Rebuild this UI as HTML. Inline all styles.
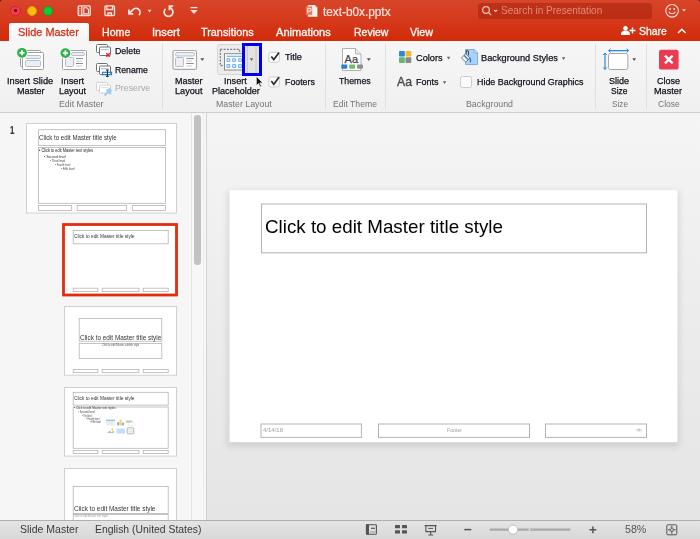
<!DOCTYPE html>
<html><head><meta charset="utf-8">
<style>
*{margin:0;padding:0;box-sizing:border-box}
html,body{width:700px;height:539px;overflow:hidden;background:#e9e9e9;font-family:"Liberation Sans",sans-serif}
.a{position:absolute}
.t{position:absolute;white-space:nowrap;line-height:1;transform-origin:0 0}
#top{left:0;top:0;width:700px;height:41px;background:linear-gradient(#d8452a,#d5391b 50%,#d12b09);border-radius:2.5px 2.5px 0 0}
.tl{position:absolute;top:5.55px;width:10.5px;height:10.5px;border-radius:50%}
.tab{color:#fff;font-size:11px;top:26.7px;-webkit-text-stroke:0.35px #fff}
#ribbon{left:0;top:41px;width:700px;height:72px;background:linear-gradient(#f6f6f6,#f0f0f0);border-bottom:1px solid #cfcfcf}
.rt{font-size:9.3px;color:#1f1f30;-webkit-text-stroke:0.2px #1f1f30}
.gl{font-size:9.3px;color:#808080}
.sep{position:absolute;top:44px;width:1px;height:65px;background:#e0e0e0}
.arr{position:absolute;width:0;height:0;border-left:3px solid transparent;border-right:3px solid transparent;border-top:4px solid #6a6a6a}
#left{left:0;top:113px;width:191px;height:407px;background:#f6f6f6}
#main{left:207px;top:113px;width:493px;height:407px;background:linear-gradient(#f5f5f5,#ececec 50%,#e5e5e5)}
#status{left:0;top:520px;width:700px;height:19px;background:linear-gradient(#e4e4e4,#d8d8d8);border-top:1px solid #b0b0b0}
.thumb{position:absolute;background:#fff;border:1px solid #cfcfcf}
.ph{position:absolute;border:1px solid #b8b8b8}
</style></head><body>
<!-- TOP BAR -->
<div class="a" style="left:0;top:0;width:700px;height:4px;background:#222"></div>
<div id="top" class="a">
  <div class="tl" style="left:10.15px;background:#f6394c;border:1px solid #cf2234"><div class="a" style="left:3.1px;top:2.9px;width:2.6px;height:2.6px;border-radius:50%;background:#4a0808"></div></div>
  <div class="tl" style="left:26.75px;background:#fdbb0c;border:1px solid #dc9b10"></div>
  <div class="tl" style="left:42.95px;background:#12ca34;border:1px solid #0ea42a"></div>
  <!-- tabs -->
  <div class="a" style="left:9px;top:23px;width:80px;height:18px;background:linear-gradient(#fdfdfd,#f4f4f4);border-radius:2px 2px 0 0"></div>
  <!-- title -->
  <!-- search -->
  <div class="a" style="left:478px;top:3px;width:174px;height:16px;border-radius:3px;background:rgba(150,28,8,0.42)"></div>
  <svg class="a" style="left:0;top:0" width="700" height="41" viewBox="0 0 700 41">
   <g fill="none" stroke="#fbe3dc" stroke-width="1.3">
    <rect x="78.2" y="5.9" width="12" height="9.6" rx="1"/><path d="M81.8 5.9v9.6"/>
    <path d="M79.9 8.2v.9M79.9 10.3v.9M79.9 12.4v.9" stroke-width="1"/>
    <path d="M83.8 7.8h3l1.7 1.7v4.4h-4.7z" stroke-width="1.1"/>
    <rect x="104.9" y="5.9" width="9.6" height="9.6" rx="1"/><path d="M106.8 5.9v3.6h5.8v-3.6M108 15.5v-2.5h3.4v2.5"/>
    <path d="M128.9 9.4v4.4h4.4" stroke-width="1.8"/>
    <path d="M129.3 13.4l3.8-3.8a4 4 0 1 1 5.8 5.6" stroke-width="1.8"/>
    <path d="M165.5 8.9A4.4 4.4 0 1 0 171.6 8.9L169.4 6.7M169.4 10.2V6.2h3.8" stroke-width="1.7"/>
   </g>
   <path d="M147.5 9.8h4l-2 2.6z" fill="#fbe3dc"/>
   <path d="M190.5 7.6h7" stroke="#fbe3dc" stroke-width="1.3"/><path d="M190.3 10h7.4l-3.7 4z" fill="#fbe3dc"/>
   <!-- ppt doc icon -->
   <path d="M307.8 5h7l2.6 2.6v9.1h-9.6z" fill="#f7efe9"/>
   <path d="M314.8 5v2.6h2.6z" fill="#d9c4bd"/>
   <rect x="305.8" y="6.5" width="6.4" height="8.3" fill="#e8765a"/>
   <path d="M307.7 13.3v-5h1.9a1.5 1.5 0 0 1 0 3h-1.9" fill="none" stroke="#fbe9e2" stroke-width="1.1"/>
   <!-- search magnifier -->
   <circle cx="486" cy="10" r="3.3" fill="none" stroke="#f0c3b8" stroke-width="1.2"/>
   <path d="M488.4 12.4l2.8 2.8M494 10l1.6 1.5 1.6-1.5" fill="none" stroke="#f0c3b8" stroke-width="1.2"/>
   <!-- smiley -->
   <circle cx="672.1" cy="10.8" r="6.3" fill="none" stroke="#fbe3dc" stroke-width="1.1"/>
   <circle cx="670" cy="9" r=".9" fill="#fbe3dc"/><circle cx="674.2" cy="9" r=".9" fill="#fbe3dc"/>
   <path d="M668.8 11.8c1.5 2.6 5.1 2.6 6.6 0" fill="none" stroke="#fbe3dc" stroke-width="1.1"/>
   <path d="M682 9.3h4l-2 2.3z" fill="#fbe3dc"/>
   <!-- share -->
   <circle cx="625.5" cy="28.3" r="2.3" fill="#fff"/>
   <path d="M621 35c0-3.5 1.8-4.5 4.5-4.5s4.5 1 4.5 4.5z" fill="#fff"/>
   <path d="M632.5 27.5v6M629.5 30.5h6" stroke="#fff" stroke-width="1.4"/>
   <path d="M678 33l3.8-3.8 3.8 3.8" fill="none" stroke="#fff" stroke-width="1.5"/>
  </svg>
</div>
<!-- RIBBON -->
<div id="ribbon" class="a"></div>
<div class="sep" style="left:162px"></div>
<div class="sep" style="left:325px"></div>
<div class="sep" style="left:385px"></div>
<div class="sep" style="left:594.5px"></div>
<div class="sep" style="left:646px"></div>
<svg class="a" style="left:0;top:0" width="700" height="120" viewBox="0 0 700 120">
 <!-- Insert Slide Master -->
 <rect x="20.5" y="50.5" width="20" height="16" rx="1" fill="#fff" stroke="#9c9c9c"/>
 <rect x="22.5" y="52.5" width="21" height="17" rx="1" fill="#fff" stroke="#9c9c9c"/>
 <rect x="25.5" y="55.5" width="15" height="3" rx="1" fill="#eceef2" stroke="#b3bdd0"/>
 <rect x="25.5" y="60.5" width="15" height="6" rx="1" fill="#eceef2" stroke="#b3bdd0"/>
 <circle cx="22" cy="52.8" r="5.8" fill="#f5f5f5"/>
 <circle cx="22" cy="52.8" r="4.9" fill="#2eb24a"/>
 <path d="M22 50.3v5M19.5 52.8h5" stroke="#fff" stroke-width="1.8"/>
 <!-- Insert Layout -->
 <rect x="62.5" y="50.5" width="24" height="19" rx="1" fill="#fff" stroke="#a3a3a3"/>
 <rect x="71.5" y="52.5" width="13" height="3" rx="1.5" fill="#eceef2" stroke="#b3bdd0"/>
 <rect x="65.5" y="57.5" width="8" height="9" rx="1" fill="#eceef2" stroke="#b3bdd0"/>
 <path d="M76 58.5h7M76 63.5h7" stroke="#8d8d8d"/>
 <path d="M76 61h6M76 66h6" stroke="#c8c8c8"/>
 <circle cx="65.4" cy="53.1" r="5.8" fill="#f5f5f5"/>
 <circle cx="65.4" cy="53.1" r="4.9" fill="#2eb24a"/>
 <path d="M65.4 50.6v5M62.9 53.1h5" stroke="#fff" stroke-width="1.8"/>
 <!-- Delete -->
 <rect x="96.5" y="44.5" width="11" height="8" rx="1" fill="#fff" stroke="#707070"/>
 <rect x="99.5" y="47" width="11" height="8.5" rx="1" fill="#fff" stroke="#707070"/>
 <path d="M101 49.6h7.5" stroke="#b6c2d8" stroke-width="1.2"/>
 <path d="M106.3 53.2l3.6 3.6M109.9 53.2l-3.6 3.6" stroke="#e0203a" stroke-width="1.5"/>
 <!-- Rename -->
 <rect x="96.5" y="63.5" width="11" height="8" rx="1" fill="#fff" stroke="#707070"/>
 <rect x="99.5" y="66" width="11" height="8.5" rx="1" fill="#fff" stroke="#707070"/>
 <path d="M101 68.6h7.5" stroke="#b6c2d8" stroke-width="1.2"/>
 <rect x="102.5" y="72.3" width="9" height="2.4" fill="none" stroke="#2a82da" stroke-width="1.2"/>
 <path d="M107.4 70v6.4M106 70h2.8M106 76.4h2.8" stroke="#222" stroke-width="1"/>
 <!-- Preserve -->
 <rect x="96.5" y="82.5" width="11" height="8" rx="1" fill="#fff" stroke="#cfcfcf"/>
 <rect x="99.5" y="85" width="11" height="8" rx="1" fill="#fff" stroke="#cfcfcf"/>
 <path d="M101 87.6h7.5" stroke="#dde2ea" stroke-width="1.2"/>
 <path d="M104.5 95.5l3.5-3.5M106.5 89.5l4.5 4.5M108.5 88.5l3 3" stroke="#9fcbf2" stroke-width="2"/>
 <!-- Master Layout -->
 <rect x="173" y="50.5" width="23.5" height="18.8" rx="1.5" fill="#fff" stroke="#a8a8a8" stroke-width="1.2"/>
 <rect x="175.5" y="52.5" width="19" height="3.5" rx="1.5" fill="#eceef2" stroke="#b3bdd0"/>
 <rect x="175.5" y="57.5" width="8" height="9" rx="1" fill="#eceef2" stroke="#b3bdd0"/>
 <path d="M186.3 58.5h7.4M186.3 63.5h7.4" stroke="#8d8d8d"/>
 <path d="M186.3 61h5.7M186.3 66h5.7" stroke="#c8c8c8"/>
 <path d="M200.3 58.3h4l-2 2.8z" fill="#555"/>
 <!-- Insert Placeholder button -->
 <rect x="217.5" y="44.5" width="44" height="30" rx="2.5" fill="#ececec" stroke="#d6d6d6"/>
 <rect x="220.3" y="49.3" width="19.4" height="16.4" fill="none" stroke="#666" stroke-dasharray="2,1.3"/>
 <rect x="224.5" y="53.7" width="20" height="16.3" fill="#fff" stroke="#8a8a8a"/>
 <path d="M226.7 56.3h16" stroke="#6fb1ef" stroke-width="1.2"/>
 <g fill="#fff" stroke="#7ab4ee" stroke-width="1.2">
  <rect x="227" y="58.8" width="2.8" height="2.6" rx=".6"/><rect x="232.7" y="58.8" width="2.9" height="2.6" rx=".6"/><rect x="238.6" y="58.8" width="2.9" height="2.6" rx=".6"/>
  <rect x="227" y="64.7" width="2.8" height="2.6" rx=".6"/><rect x="232.7" y="64.7" width="2.9" height="2.6" rx=".6"/><rect x="238.6" y="64.7" width="2.9" height="2.6" rx=".6"/>
 </g>
 <rect x="245" y="46" width="14" height="27" fill="#e3e3e3"/>
 <path d="M247.5 46v27M256 46v27" stroke="#c9c9c9"/>
 <path d="M249.8 58.3h3.6l-1.8 2.6z" fill="#666"/>
 <rect x="243.5" y="44.5" width="17" height="30" fill="none" stroke="#0000f0" stroke-width="3"/>
 <!-- cursor -->
 <path d="M256.3 76.2v9.5l2.2-2.1 1.6 3.4 1.4-.7-1.6-3.3h3z" fill="#111" stroke="#fff" stroke-width=".7"/>
 <!-- checkboxes -->
 <rect x="268.8" y="52.3" width="10.5" height="10" rx="2" fill="#fcfcfc" stroke="#cdcdcd"/>
 <path d="M271.3 56.4l2.5 3.2 5.3-7.2" fill="none" stroke="#2e2e2e" stroke-width="1.7"/>
 <rect x="268.8" y="77" width="10.5" height="10" rx="2" fill="#fcfcfc" stroke="#cdcdcd"/>
 <path d="M271.3 81.1l2.5 3.2 5.3-7.2" fill="none" stroke="#2e2e2e" stroke-width="1.7"/>
 <!-- Themes -->
 <path d="M342.5 48.5h13l5.5 5.5v16.5h-18.5z" fill="#fff" stroke="#b0b0b0"/>
 <path d="M355.5 48.5v5.5h5.5" fill="#eee" stroke="#b0b0b0"/>
 <text x="344.6" y="62.8" font-family="Liberation Sans" font-size="11" fill="#444" stroke="#444" stroke-width=".25">Aa</text>
 <rect x="341.3" y="64.5" width="6" height="4.3" rx="1" fill="#2a7fd4"/>
 <rect x="349.2" y="64.5" width="6" height="4.3" rx="1" fill="#6cc06a"/>
 <rect x="357" y="64.5" width="6" height="4.3" rx="1" fill="#8f8f8f"/>
 <path d="M366.8 58.3h4l-2 2.8z" fill="#555"/>
 <!-- Colors -->
 <rect x="399" y="51" width="5.8" height="5.6" rx=".8" fill="#2e86d6"/>
 <rect x="405.5" y="51" width="5.8" height="5.6" rx=".8" fill="#f2bb2a"/>
 <rect x="399" y="57.3" width="5.8" height="5.6" rx=".8" fill="#63b96a"/>
 <rect x="405.5" y="57.3" width="5.8" height="5.6" rx=".8" fill="#888"/>
 <path d="M446.8 56.8h3.6l-1.8 2.6z" fill="#666"/>
 <path d="M442.8 81.3h3.6l-1.8 2.6z" fill="#666"/>
 <!-- Background styles -->
 <path d="M465.5 49.5h8.5l3.5 3.5v11.5h-12z" fill="#a9d2f6" stroke="#7aaee2"/>
 <path d="M474 49.5v3.5h3.5z" fill="#fff" stroke="#7aaee2"/>
 <path d="M461.5 58l4.2-4.2 4.2 4.2-4.2 4.2z" fill="#fff" stroke="#777"/>
 <path d="M464 55.3l4.4 4.4" stroke="#2a7fd4" stroke-width="1.5"/>
 <path d="M466 53.8l.5-3.3 1.8.4.3 4.5" fill="none" stroke="#333" stroke-width=".9"/>
 <path d="M469.3 57.5c1.5 1.5 1.5 3.5 .8 5" fill="none" stroke="#2a7fd4" stroke-width="1.3"/>
 <path d="M561.8 57.3h3.6l-1.8 2.6z" fill="#666"/>
 <rect x="460.5" y="76.5" width="11" height="11" rx="2" fill="#fbfbfb" stroke="#cacaca"/>
 <!-- Slide size -->
 <rect x="608.5" y="53.5" width="19.3" height="16" rx="2" fill="#fff" stroke="#a8a8a8"/>
 <path d="M609 50.6h19M605 53v16.4" stroke="#2f86d8" stroke-width="1.2"/>
 <path d="M610.5 48.8l-2 1.8 2 1.8M626.7 48.8l2 1.8-2 1.8M603.2 55l1.8-2 1.8 2M603.2 67.4l1.8 2 1.8-2" fill="none" stroke="#2f86d8" stroke-width="1"/>
 <path d="M632.3 58.2h3.8l-1.9 2.7z" fill="#555"/>
 <!-- Close -->
 <rect x="659" y="49.8" width="19.6" height="19.8" rx="2.2" fill="#ea3b50"/>
 <path d="M665 55.7l7.6 7.6M672.6 55.7l-7.6 7.6" stroke="#fff" stroke-width="2.4"/>
</svg>
<!-- LEFT PANEL -->
<div id="left" class="a"></div>
<div id="main" class="a"></div>
<div class="a" style="left:191px;top:113px;width:1px;height:407px;background:#e3e3e3"></div>
<div class="a" style="left:192px;top:113px;width:14px;height:407px;background:#f7f7f7"></div>
<div class="a" style="left:202.5px;top:113px;width:1px;height:407px;background:#ececec"></div>
<div class="a" style="left:194px;top:115px;width:6.5px;height:149.5px;border-radius:3.3px;background:#c2c2c2"></div>
<div class="a" style="left:206px;top:113px;width:1px;height:407px;background:#d2d2d2"></div>
<svg class="a" style="left:0;top:0" width="700" height="539" viewBox="0 0 700 539">
 <defs>
  <filter id="sh" x="-10%" y="-10%" width="120%" height="125%"><feGaussianBlur stdDeviation="3"/></filter>
 </defs>
 <!-- thumb1 -->
 <rect x="26.5" y="123.5" width="150" height="89.5" fill="#fff" stroke="#d0d0d0"/>
 <g fill="none" stroke="#b4b4b4" stroke-width=".8">
  <rect x="38.4" y="129.7" width="127" height="15.7"/>
  <rect x="38.4" y="147.5" width="127" height="55.8"/>
  <rect x="38.4" y="205.4" width="33" height="5"/>
  <rect x="77.2" y="205.4" width="49.4" height="5"/>
  <rect x="132.4" y="205.4" width="33" height="5"/>
 </g>
 <!-- thumb2 selected -->
 <rect x="63.5" y="224.5" width="113" height="70.5" fill="#fff" stroke="#e02d10" stroke-width="2.8"/>
 <g fill="none" stroke="#b4b4b4" stroke-width=".8">
  <rect x="73.2" y="230.4" width="95" height="13.4"/>
  <rect x="73.2" y="288.2" width="24.8" height="3.4"/>
  <rect x="102.2" y="288.2" width="36.8" height="3.4"/>
  <rect x="143.2" y="288.2" width="25" height="3.4"/>
 </g>
 <!-- thumb3 -->
 <rect x="64.5" y="306.5" width="112" height="68.7" fill="#fff" stroke="#d0d0d0"/>
 <g fill="none" stroke="#b4b4b4" stroke-width=".8">
  <rect x="79.2" y="318.4" width="82.6" height="22.8"/>
  <rect x="79.2" y="343.4" width="82.6" height="15"/>
  <rect x="73.2" y="369.4" width="24.8" height="3"/>
  <rect x="102.2" y="369.4" width="36.8" height="3"/>
  <rect x="143.2" y="369.4" width="25" height="3"/>
 </g>
 <!-- thumb4 -->
 <rect x="64.5" y="387.5" width="112" height="68.6" fill="#fff" stroke="#d0d0d0"/>
 <g fill="none" stroke="#b4b4b4" stroke-width=".8">
  <rect x="73.2" y="392.3" width="95" height="12.8"/>
  <rect x="73.2" y="407" width="95" height="41.3"/>
  <rect x="73.2" y="450.4" width="24.8" height="3"/>
  <rect x="102.2" y="450.4" width="36.8" height="3"/>
  <rect x="143.2" y="450.4" width="25" height="3"/>
 </g>
 <g>
  <rect x="106" y="419.7" width="9" height="6" fill="#f4f4f4"/>
  <rect x="106" y="419.7" width="9" height="1.3" fill="#8ec3f0"/>
  <path d="M106 422.5h9M106 424h9M109 421v4.7M112 421v4.7" stroke="#e2e2e2" stroke-width=".5"/>
  <rect x="117" y="422" width="2.3" height="3.6" rx=".8" fill="#7db5ef"/>
  <rect x="119.4" y="419.5" width="2.2" height="6.1" rx=".6" fill="#f1d27a"/>
  <rect x="121.9" y="422.5" width="2" height="3.1" rx=".6" fill="#a9a9a9"/>
  <path d="M126.2 420.6h5.5l1 1-2 1.2h-4.5z" fill="#a9d6a6"/>
  <rect x="128.3" y="422.4" width="6" height="3.2" rx="1" fill="none" stroke="#dedede" stroke-width=".6"/>
  <path d="M107 433l2.5-2.2 2 1.2 2.5-1.5v2.5z" fill="#a4d29a"/>
  <circle cx="112.4" cy="429.4" r=".9" fill="#f2c04c"/>
  <rect x="116.6" y="428.6" width="8.4" height="5" fill="#c3def6"/>
  <rect x="127.2" y="427.8" width="6.6" height="6" rx=".8" fill="none" stroke="#adadad" stroke-width=".9"/>
  <path d="M127.2 429.8h6.6M127.2 431.8h6.6" stroke="#bdbdbd" stroke-width=".5"/>
 </g>
 <!-- thumb5 -->
 <rect x="64.5" y="468.5" width="112" height="70" fill="#fff" stroke="#d0d0d0"/>
 <g fill="none" stroke="#b4b4b4" stroke-width=".8">
  <rect x="73.2" y="486.4" width="95" height="27.2"/>
  <rect x="73.2" y="514.6" width="95" height="20"/>
 </g>
 <!-- main slide -->
 <rect x="227.5" y="191" width="452" height="256" fill="#000" opacity=".10" filter="url(#sh)"/>
 <rect x="229.5" y="190.2" width="448" height="252" fill="#fff"/>
 <g fill="none" stroke="#b3b3b3" stroke-width="1">
  <rect x="261.5" y="204" width="385" height="48.8"/>
  <rect x="261" y="424" width="100.4" height="13.4"/>
  <rect x="378.5" y="424" width="151" height="13.4"/>
  <rect x="545.5" y="424" width="101" height="13.4"/>
 </g>
</svg>
<!-- thumb texts -->
<!-- STATUS -->
<div id="status" class="a"></div>
<svg class="a" style="left:0;top:520" width="700" height="19" viewBox="0 520 700 19">
 <rect x="366.4" y="524.8" width="10" height="9.4" rx=".8" fill="none" stroke="#555" stroke-width="1.1"/>
 <rect x="366" y="524.3" width="3" height="10.3" fill="#555"/>
 <rect x="370" y="531" width="6" height="3" fill="#bbb"/>
 <path d="M371 528.3h3.8" stroke="#555" stroke-width="1.2"/>
 <g fill="#555">
  <rect x="395" y="525" width="5" height="3.3" rx=".6"/><rect x="402" y="525" width="5" height="3.3" rx=".6"/>
  <rect x="395" y="530.2" width="5" height="3.3" rx=".6"/><rect x="402" y="530.2" width="5" height="3.3" rx=".6"/>
 </g>
 <g fill="none" stroke="#555" stroke-width="1.1">
  <path d="M424.6 525.6h12M425.9 525.6v6h9.6v-6M430.7 531.6v3M428.2 535h5"/>
  <path d="M428.3 528.4h4.8" stroke-width="1"/>
 </g>
 <path d="M464.3 529.6h7" stroke="#555" stroke-width="1.5"/>
 <path d="M490.5 529.6h79" stroke="#a9a9a9" stroke-width="2.2" stroke-linecap="round"/>
 <circle cx="529.5" cy="529.6" r=".9" fill="#eee"/>
 <circle cx="513" cy="529.6" r="4.6" fill="#fff" stroke="#b4b4b4" stroke-width=".8"/>
 <path d="M589.5 529.8h6.8M592.9 526.4v6.8" stroke="#555" stroke-width="1.5"/>
 <rect x="666.8" y="524.8" width="10" height="10" rx="1" fill="none" stroke="#555" stroke-width="1"/>
 <path d="M671.8 525.8v2.6M671.8 531.2v2.6M667.8 529.8h2.6M673.2 529.8h2.6" stroke="#555" stroke-width="1"/>
 <path d="M670.6 527.6l1.2 1.3 1.2-1.3M670.6 532l1.2-1.3 1.2 1.3M669.7 528.6l1.3 1.2-1.3 1.2M673.9 528.6l-1.3 1.2 1.3 1.2" fill="none" stroke="#555" stroke-width=".8"/>
</svg>
<div class="t" style="left:18.20px;top:27.00px;font-size:11.4px;color:#d6301a;transform:scaleX(0.961);-webkit-text-stroke:0.3px #d6301a">Slide Master</div>
<div class="t" style="left:101.70px;top:27.00px;font-size:11.4px;color:#fff;transform:scaleX(0.931);-webkit-text-stroke:0.3px #fff">Home</div>
<div class="t" style="left:151.90px;top:27.00px;font-size:11.4px;color:#fff;transform:scaleX(0.979);-webkit-text-stroke:0.3px #fff">Insert</div>
<div class="t" style="left:201.20px;top:27.00px;font-size:11.4px;color:#fff;transform:scaleX(0.952);-webkit-text-stroke:0.3px #fff">Transitions</div>
<div class="t" style="left:276.30px;top:27.00px;font-size:11.4px;color:#fff;transform:scaleX(0.972);-webkit-text-stroke:0.3px #fff">Animations</div>
<div class="t" style="left:353.60px;top:27.00px;font-size:11.4px;color:#fff;transform:scaleX(0.921);-webkit-text-stroke:0.3px #fff">Review</div>
<div class="t" style="left:410.10px;top:27.00px;font-size:11.4px;color:#fff;transform:scaleX(0.941);-webkit-text-stroke:0.3px #fff">View</div>
<div class="t" style="left:638.80px;top:26.00px;font-size:11.4px;color:#fff;transform:scaleX(0.911);-webkit-text-stroke:0.3px #fff">Share</div>
<div class="t" style="left:322.50px;top:6.00px;font-size:12px;color:#fbe6e0;transform:scaleX(0.983);-webkit-text-stroke:0.2px #fbe6e0">text-b0x.pptx</div>
<div class="t" style="left:500.80px;top:5.00px;font-size:10.75px;color:#e48a76;transform:scaleX(0.931);">Search in Presentation</div>
<div class="t" style="left:7.40px;top:76.00px;font-size:9.45px;color:#10101c;transform:scaleX(0.978);-webkit-text-stroke:0.25px #10101c">Insert Slide</div>
<div class="t" style="left:16.90px;top:86.00px;font-size:9.45px;color:#10101c;transform:scaleX(0.958);-webkit-text-stroke:0.25px #10101c">Master</div>
<div class="t" style="left:61.10px;top:76.00px;font-size:9.45px;color:#10101c;transform:scaleX(0.981);-webkit-text-stroke:0.25px #10101c">Insert</div>
<div class="t" style="left:59.30px;top:86.00px;font-size:9.45px;color:#10101c;transform:scaleX(0.956);-webkit-text-stroke:0.25px #10101c">Layout</div>
<div class="t" style="left:58.50px;top:99.00px;font-size:9.45px;color:#747478;transform:scaleX(0.933);">Edit Master</div>
<div class="t" style="left:114.80px;top:46.00px;font-size:9.45px;color:#10101c;transform:scaleX(0.934);-webkit-text-stroke:0.25px #10101c">Delete</div>
<div class="t" style="left:114.80px;top:65.00px;font-size:9.45px;color:#10101c;transform:scaleX(0.922);-webkit-text-stroke:0.25px #10101c">Rename</div>
<div class="t" style="left:114.80px;top:83.00px;font-size:9.45px;color:#a9a9ad;transform:scaleX(0.931);">Preserve</div>
<div class="t" style="left:174.50px;top:76.00px;font-size:9.45px;color:#10101c;transform:scaleX(0.952);-webkit-text-stroke:0.25px #10101c">Master</div>
<div class="t" style="left:174.90px;top:86.00px;font-size:9.45px;color:#10101c;transform:scaleX(0.970);-webkit-text-stroke:0.25px #10101c">Layout</div>
<div class="t" style="left:224.40px;top:76.00px;font-size:9.45px;color:#10101c;transform:scaleX(0.964);-webkit-text-stroke:0.25px #10101c">Insert</div>
<div class="t" style="left:211.90px;top:86.00px;font-size:9.45px;color:#10101c;transform:scaleX(0.960);-webkit-text-stroke:0.25px #10101c">Placeholder</div>
<div class="t" style="left:215.90px;top:99.00px;font-size:9.45px;color:#747478;transform:scaleX(0.932);">Master Layout</div>
<div class="t" style="left:285.30px;top:52.00px;font-size:9.45px;color:#10101c;transform:scaleX(0.966);-webkit-text-stroke:0.25px #10101c">Title</div>
<div class="t" style="left:285.30px;top:77.00px;font-size:9.45px;color:#10101c;transform:scaleX(0.933);-webkit-text-stroke:0.25px #10101c">Footers</div>
<div class="t" style="left:339.00px;top:76.00px;font-size:9.45px;color:#10101c;transform:scaleX(0.928);-webkit-text-stroke:0.25px #10101c">Themes</div>
<div class="t" style="left:333.00px;top:99.00px;font-size:9.45px;color:#747478;transform:scaleX(0.914);">Edit Theme</div>
<div class="t" style="left:416.20px;top:53.00px;font-size:9.45px;color:#10101c;transform:scaleX(0.974);-webkit-text-stroke:0.25px #10101c">Colors</div>
<div class="t" style="left:416.40px;top:77.00px;font-size:9.45px;color:#10101c;transform:scaleX(0.956);-webkit-text-stroke:0.25px #10101c">Fonts</div>
<div class="t" style="left:481.00px;top:53.00px;font-size:9.45px;color:#10101c;transform:scaleX(0.977);-webkit-text-stroke:0.25px #10101c">Background Styles</div>
<div class="t" style="left:477.40px;top:77.00px;font-size:9.45px;color:#10101c;transform:scaleX(0.944);-webkit-text-stroke:0.25px #10101c">Hide Background Graphics</div>
<div class="t" style="left:466.00px;top:99.00px;font-size:9.45px;color:#747478;transform:scaleX(0.932);">Background</div>
<div class="t" style="left:609.20px;top:76.00px;font-size:9.45px;color:#10101c;transform:scaleX(0.957);-webkit-text-stroke:0.25px #10101c">Slide</div>
<div class="t" style="left:611.00px;top:86.00px;font-size:9.45px;color:#10101c;transform:scaleX(0.897);-webkit-text-stroke:0.25px #10101c">Size</div>
<div class="t" style="left:612.00px;top:99.00px;font-size:9.45px;color:#747478;transform:scaleX(0.870);">Size</div>
<div class="t" style="left:656.80px;top:76.00px;font-size:9.45px;color:#10101c;transform:scaleX(0.957);-webkit-text-stroke:0.25px #10101c">Close</div>
<div class="t" style="left:654.40px;top:86.00px;font-size:9.45px;color:#10101c;transform:scaleX(0.969);-webkit-text-stroke:0.25px #10101c">Master</div>
<div class="t" style="left:657.90px;top:99.00px;font-size:9.45px;color:#747478;transform:scaleX(0.899);">Close</div>
<div class="t" style="left:20.00px;top:524.00px;font-size:10.9px;color:#3a3a3a;transform:scaleX(0.965);">Slide Master</div>
<div class="t" style="left:9.50px;top:125.00px;font-size:10.6px;color:#3a3a3a;transform:scaleX(0.746);font-weight:bold;-webkit-text-stroke:0.2px #3a3a3a">1</div>
<div class="t" style="left:397.30px;top:75.00px;font-size:13.5px;color:#4a4a4a;transform:scaleX(0.906);-webkit-text-stroke:0.35px #4a4a4a">Aa</div>
<div class="t" style="left:95.00px;top:524.00px;font-size:10.9px;color:#3a3a3a;transform:scaleX(0.956);">English (United States)</div>
<div class="t" style="left:625.00px;top:524.00px;font-size:10.9px;color:#555;transform:scaleX(0.977);">58%</div>
<div class="t" style="left:264.70px;top:218.00px;font-size:18.6px;color:#000;transform:scaleX(1.010);">Click to edit Master title style</div>
<div class="t" style="left:263.00px;top:428.00px;font-size:5px;color:#a0a0a0;transform:scaleX(1.198);">4/14/18</div>
<div class="t" style="left:447.00px;top:428.00px;font-size:5px;color:#a0a0a0;transform:scaleX(1.038);">Footer</div>
<div class="t" style="left:636.20px;top:428.00px;font-size:5px;color:#a0a0a0;transform:scaleX(0.674);">&lt;#&gt;</div>
<div class="t" style="left:38.90px;top:134.00px;font-size:7.8px;color:#333;transform:scaleX(0.786);">Click to edit Master title style</div>
<div class="t" style="left:38.90px;top:149.00px;font-size:4.5px;color:#222;transform:scaleX(0.869);">• Click to edit Master text styles</div>
<div class="t" style="left:43.60px;top:156.00px;font-size:3.8px;color:#333;transform:scaleX(0.907);">• Second level</div>
<div class="t" style="left:49.50px;top:160.00px;font-size:3.2px;color:#444;transform:scaleX(0.916);">• Third level</div>
<div class="t" style="left:55.40px;top:164.00px;font-size:3.2px;color:#444;transform:scaleX(0.816);">• Fourth level</div>
<div class="t" style="left:60.50px;top:168.00px;font-size:3.2px;color:#444;transform:scaleX(0.873);">• Fifth level</div>
<div class="t" style="left:73.50px;top:233.00px;font-size:6px;color:#333;transform:scaleX(0.796);">Click to edit Master title style</div>
<div class="t" style="left:80.00px;top:334.00px;font-size:8px;color:#333;transform:scaleX(0.801);">Click to edit Master title style</div>
<div class="t" style="left:102.40px;top:344.00px;font-size:3px;color:#555;transform:scaleX(0.866);">Click to edit Master subtitle style</div>
<div class="t" style="left:73.50px;top:395.00px;font-size:6px;color:#333;transform:scaleX(0.796);">Click to edit Master title style</div>
<div class="t" style="left:73.60px;top:407.00px;font-size:3.4px;color:#333;transform:scaleX(0.887);">• Click to edit Master text styles</div>
<div class="t" style="left:77.70px;top:411.00px;font-size:3px;color:#444;transform:scaleX(0.877);">• Second level</div>
<div class="t" style="left:81.90px;top:416.00px;font-size:2.6px;color:#444;transform:scaleX(0.743);">• Third level</div>
<div class="t" style="left:85.60px;top:419.00px;font-size:2.6px;color:#444;transform:scaleX(0.882);">• Fourth level</div>
<div class="t" style="left:90.30px;top:422.00px;font-size:2.6px;color:#444;transform:scaleX(0.839);">• Fifth level</div>
<div class="t" style="left:73.50px;top:505.00px;font-size:7.6px;color:#333;transform:scaleX(0.846);">Click to edit Master title style</div>
<div class="t" style="left:73.60px;top:515.00px;font-size:2.8px;color:#999;transform:scaleX(0.926);">Click to edit Master text styles</div>
</body></html>
